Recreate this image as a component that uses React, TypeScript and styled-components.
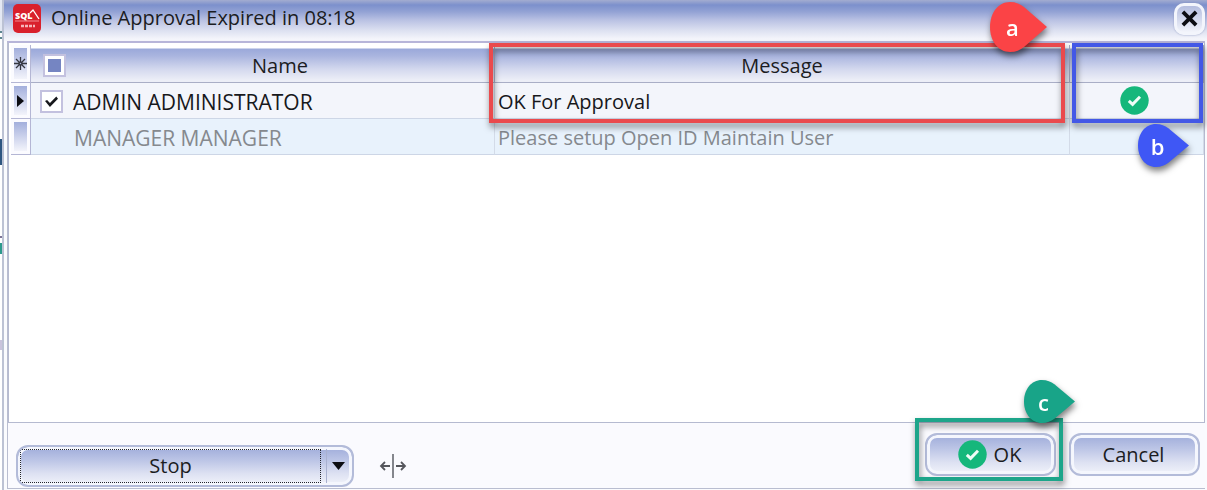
import React from 'react';
import styled, { createGlobalStyle, css } from 'styled-components';

const GlobalStyle = createGlobalStyle`
  *, *::before, *::after { box-sizing: border-box; }
  body {
    margin: 0;
    background: #fafbfe;
    font-family: 'Open Sans', 'Noto Sans', sans-serif;
    font-size: 20px;
    line-height: 26px;
    color: #1b1c22;
  }
  button, input { font: inherit; color: inherit; }
`;

const Desktop = styled.div`
  display: flex;
  min-height: 100vh;
`;

/* Sliver of the application window that stays visible behind the dialog. */
const BackWindow = styled.div`
  flex: none;
  width: 4px;
  border-right: 2px solid #bcc2d4;
  background: linear-gradient(
    #e4e8f3 0 31px, #5d8590 31px 33px, #fff 33px 37px, #5d8590 37px 39px, #fff 39px 139px,
    #2f5680 139px 165px, #fff 165px 236px, #7d7396 236px 238px, #fff 238px 243px,
    #2d9a8c 243px 254px, #fff 254px 340px, #c9c3dc 340px 350px, #fff 350px
  );
`;

const Dialog = styled.section`
  flex: 1;
  min-width: 0;
  display: flex;
  flex-direction: column;
  padding-bottom: 1px;
`;

const TitleBar = styled.header`
  display: flex;
  align-items: center;
  height: 41px;
  padding: 0 2px 4px 9px;
  background: linear-gradient(#a3acd0 0, #7c90cc 5px, #94a3d5 12px, #b9c1e3 20px, #dbdff0 30px, #f4f5fb 39px);
`;

const Title = styled.h1`
  flex: 1;
  margin: 0 0 0 10px;
  padding-bottom: 2px;
  font-size: 20px;
  line-height: 26px;
  font-weight: 400;
`;

const CloseButton = styled.button`
  display: grid;
  place-items: center;
  width: 31px;
  height: 32px;
  padding: 0;
  border: 3px solid #f3f5fc;
  border-radius: 10px;
  background: linear-gradient(#b4bddf, #f2f4fb);
  box-shadow: 0 0 2px #8b96bd;
`;

const Client = styled.div`
  flex: 1;
  display: flex;
  flex-direction: column;
  margin: 0 2px 0 3px;
  border-top: 2px solid #b7b5d9;
  border-bottom: 1px solid #b9bdd0;
  border-left: 1px solid #b9bdd0;
`;

const Grid = styled.main`
  flex: 1;
  padding: 2px 0 0 2px;
  background: #fff;
  border: solid #b5bad0;
  border-width: 0 1px 1px 1px;
`;

const Table = styled.table`
  width: 100%;
  table-layout: fixed;
  border-collapse: separate;
  border-spacing: 0;
`;

const Col = styled.col<{ $width?: string }>`
  width: ${(p) => p.$width ?? 'auto'};
`;

const headerFill = css`
  background: linear-gradient(#fff 0 3px, #9ba9da 4px, #aab5df 11px, #d3d8ee 24px, #eceef7 35px);
`;

const HeadCell = styled.th`
  position: relative;
  height: 38px;
  padding: 4px 0 0;
  border-right: 1px solid #a9aec6;
  border-bottom: 1px solid #a9aec6;
  font-weight: 400;
  text-align: center;
  ${headerFill}
`;

const HeadContent = styled.div`
  display: flex;
  align-items: center;
  padding-left: 12px;
`;

const HeadLabel = styled.span`
  flex: 1;
`;

const Indicator = styled.th`
  height: 36px;
  padding: 3px;
  border-right: 1px solid #b4b6d4;
  border-bottom: 1px solid #b4b6d4;
  background: #fbfbff;
`;

const IndicatorFace = styled.div<{ $tall?: boolean }>`
  display: grid;
  place-items: center;
  height: ${(p) => (p.$tall ? '31px' : '29px')};
  background: linear-gradient(#a3afdc, #c7ceea 45%, #f3f4fb);
`;

const Row = styled.tr<{ $muted?: boolean }>`
  background: ${(p) => (p.$muted ? '#e8f2fc' : '#f3f5fb')};
  color: ${(p) => (p.$muted ? '#85898e' : '#17181c')};
`;

const Cell = styled.td`
  height: 36px;
  padding: 2px 0 0 3px;
  border-right: 1px solid #d3dbe8;
  border-bottom: 1px solid #cdd6e6;
  white-space: nowrap;
`;

const StatusCell = styled(Cell)`
  padding: 0 4px 0 0;
  text-align: center;
  svg { display: block; margin: 0 auto; }
`;

const NameLabel = styled.label<{ $inset?: boolean }>`
  display: flex;
  align-items: center;
  gap: 10px;
  padding-left: ${(p) => (p.$inset ? '40px' : '6px')};
  font-size: 21px;
`;

const CheckBox = styled.input<{ $partial?: boolean }>`
  appearance: none;
  flex: none;
  width: 23px;
  height: 23px;
  margin: 0;
  border: 2px solid #c3c1df;
  background: #fff
    ${(p) =>
      p.$partial
        ? 'linear-gradient(#7585c2, #7585c2) center / 13px 13px no-repeat'
        : ''};
  display: grid;
  place-items: center;
  &:checked::before {
    content: '';
    width: 13px;
    height: 13px;
    background: #17181c;
    clip-path: polygon(0 47%, 16% 38%, 38% 61%, 87% 12%, 100% 29%, 38% 92%);
  }
`;

const Footer = styled.footer`
  display: flex;
  align-items: flex-start;
  height: 65px;
  padding: 10px 5px 0 8px;
  background: #fafafe;
`;

const buttonFace = css`
  border: 2px solid #b3bbd9;
  background: linear-gradient(#9facda, #bcc5e6 35%, #dde1f2 70%, #f1f3fa);
  box-shadow: inset 0 0 0 3px #f4f6fd;
`;

const SplitButton = styled.div`
  display: flex;
  width: 338px;
  height: 42px;
  margin-top: 12px;
  padding: 2px;
  border-radius: 12px;
  overflow: hidden;
  ${buttonFace}
`;

const SplitMain = styled.button`
  flex: 1;
  padding: 0;
  border: 1px dotted #22242c;
  background: transparent;
`;

const SplitArrow = styled.button`
  display: grid;
  place-items: center;
  width: 24px;
  margin-left: 5px;
  padding: 0;
  border: 0;
  border-left: 1px solid #a9b1d0;
  background: transparent;
`;

const Splitter = styled.div`
  margin: 20px 0 0 25px;
  svg { display: block; }
`;

const Actions = styled.div`
  display: flex;
  gap: 13px;
  margin-left: auto;
`;

const ActionWrap = styled.div`
  position: relative;
`;

const ActionButton = styled.button`
  display: flex;
  align-items: center;
  justify-content: center;
  gap: 7px;
  width: 131px;
  height: 43px;
  padding: 0 2px 0 0;
  border-radius: 12px;
  ${buttonFace}
`;

/* Callout frames lie over the controls they point out. */
const Frame = styled.div<{ $color: string; $inset: string }>`
  position: absolute;
  inset: ${(p) => p.$inset};
  z-index: 1;
  border: 4px solid ${(p) => p.$color};
  filter: drop-shadow(1px 4px 3px rgba(0, 0, 0, 0.5));
  pointer-events: none;
`;

const Pin = styled.div<{ $color: string; $top: number; $right: number; $width: number; $height: number }>`
  position: absolute;
  z-index: 2;
  top: ${(p) => p.$top}px;
  right: ${(p) => p.$right}px;
  width: ${(p) => p.$width}px;
  height: ${(p) => p.$height}px;
  display: flex;
  align-items: center;
  justify-content: center;
  padding: 0 12px 0 0;
  color: #fff;
  font: 600 22px/26px 'Open Sans', sans-serif;
  filter: drop-shadow(1px 4px 3px rgba(0, 0, 0, 0.5));
  pointer-events: none;
  svg { position: absolute; inset: 0; width: 100%; height: 100%; fill: ${(p) => p.$color}; }
  span { position: relative; }
`;

type PinProps = { letter: string; color: string; top: number; right: number; width: number; height: number };

const Callout = ({ letter, color, top, right, width, height }: PinProps) => (
  <Pin $color={color} $top={top} $right={right} $width={width} $height={height}>
    <svg viewBox="0 0 57 50" preserveAspectRatio="none" aria-hidden="true">
      <path d="M57 25 L34 5 C30 2 26 0 20 0 C8 0 0 11 0 25 C0 39 8 50 20 50 C26 50 30 48 34 45 Z" />
    </svg>
    <span>{letter}</span>
  </Pin>
);

const CheckCircle = ({ label }: { label?: string }) => (
  <svg width="29" height="29" viewBox="0 0 29 29" role={label ? 'img' : undefined} aria-label={label} aria-hidden={!label}>
    <circle cx="14.5" cy="14.5" r="14.2" fill="#15b77b" />
    <path d="M8.8 14.9 L12.6 18.4 L20 10.8" fill="none" stroke="#effcf6" strokeWidth="3" />
  </svg>
);

const Logo = () => (
  <svg width="28" height="29" viewBox="0 0 28 29" aria-hidden="true">
    <rect width="28" height="29" rx="5" fill="#d9202c" />
    <text x="2" y="15" fill="#fff" fontFamily="Open Sans, sans-serif" fontSize="9" fontWeight="800">SQL</text>
    <path d="M17 9 L20 6 L26 15" fill="none" stroke="#fff" strokeWidth="1.3" />
    <path d="M2 17 H26" stroke="#f08a90" strokeWidth="1" />
    <path d="M8 22 H22" stroke="#f6b6ba" strokeWidth="2.5" strokeDasharray="3 1" />
  </svg>
);

const RED = '#ea4a4d';
const BLUE = '#4358e6';
const GREEN = '#1da58a';

export default function App() {
  return (
    <>
      <GlobalStyle />
      <Desktop>
        <BackWindow />
        <Dialog aria-label="Online Approval">
          <TitleBar>
            <Logo />
            <Title>Online Approval Expired in 08:18</Title>
            <CloseButton aria-label="Close">
              <svg width="17" height="17" viewBox="0 0 18 18" aria-hidden="true">
                <path d="M2 2 L16 16 M16 2 L2 16" stroke="#0c0d12" strokeWidth="4" />
              </svg>
            </CloseButton>
          </TitleBar>
          <Client>
            <Grid>
              <Table>
                <colgroup>
                  <Col $width="20px" />
                  <Col $width="464px" />
                  <Col />
                  <Col $width="134px" />
                </colgroup>
                <thead>
                  <tr>
                    <Indicator as="td">
                      <IndicatorFace $tall>
                        <svg width="13" height="13" viewBox="0 0 13 13" stroke="#33353f" strokeWidth="1.3" aria-hidden="true">
                          <path d="M6.5 0 V13 M0 6.5 H13 M2 2 L11 11 M11 2 L2 11" />
                          <circle cx="6.5" cy="6.5" r="1.4" fill="#aeb7dd" />
                        </svg>
                      </IndicatorFace>
                    </Indicator>
                    <HeadCell>
                      <HeadContent>
                        <CheckBox type="checkbox" $partial aria-label="Select all" />
                        <HeadLabel>Name</HeadLabel>
                      </HeadContent>
                    </HeadCell>
                    <HeadCell>
                      Message
                      <Frame $color={RED} $inset="-2px 4px -41px -6px" />
                      <Callout letter="a" color="#fb4346" top={-43} right={22} width={57} height={50} />
                    </HeadCell>
                    <HeadCell aria-label="Status">
                      <Frame $color={BLUE} $inset="-2px 0 -41px 2px" />
                      <Callout letter="b" color="#3f57f5" top={79} right={14} width={51} height={43} />
                    </HeadCell>
                  </tr>
                </thead>
                <tbody>
                  <Row>
                    <Indicator scope="row" aria-label="Current row">
                      <IndicatorFace>
                        <svg width="7" height="12" viewBox="0 0 7 12" aria-hidden="true">
                          <path d="M0 0 L7 6 L0 12 Z" fill="#0c0d12" />
                        </svg>
                      </IndicatorFace>
                    </Indicator>
                    <Cell>
                      <NameLabel>
                        <CheckBox type="checkbox" defaultChecked />
                        ADMIN ADMINISTRATOR
                      </NameLabel>
                    </Cell>
                    <Cell>OK For Approval</Cell>
                    <StatusCell>
                      <CheckCircle label="Approved" />
                    </StatusCell>
                  </Row>
                  <Row $muted>
                    <Indicator scope="row" aria-label="Row">
                      <IndicatorFace />
                    </Indicator>
                    <Cell>
                      <NameLabel as="span" $inset>MANAGER MANAGER</NameLabel>
                    </Cell>
                    <Cell>Please setup Open ID Maintain User</Cell>
                    <StatusCell />
                  </Row>
                </tbody>
              </Table>
            </Grid>
            <Footer>
              <SplitButton>
                <SplitMain>Stop</SplitMain>
                <SplitArrow aria-label="More stop options">
                  <svg width="13" height="8" viewBox="0 0 13 8" aria-hidden="true">
                    <path d="M0 0 H13 L6.5 8 Z" fill="#0c0d12" />
                  </svg>
                </SplitArrow>
              </SplitButton>
              <Splitter>
                <svg width="28" height="26" viewBox="0 0 28 26" fill="none" stroke="#55565c" strokeWidth="1.8" aria-hidden="true">
                  <path d="M14 1 V25" stroke="#777980" />
                  <path d="M11 13 H2 M6 9 L2 13 L6 17 M17 13 H26 M22 9 L26 13 L22 17" />
                </svg>
              </Splitter>
              <Actions>
                <ActionWrap>
                  <ActionButton>
                    <CheckCircle />
                    OK
                  </ActionButton>
                  <Frame $color={GREEN} $inset="-15px -7px -5px -10px" />
                  <Callout letter="c" color="#18a488" top={-53} right={-19} width={51} height={43} />
                </ActionWrap>
                <ActionButton>Cancel</ActionButton>
              </Actions>
            </Footer>
          </Client>
        </Dialog>
      </Desktop>
    </>
  );
}
